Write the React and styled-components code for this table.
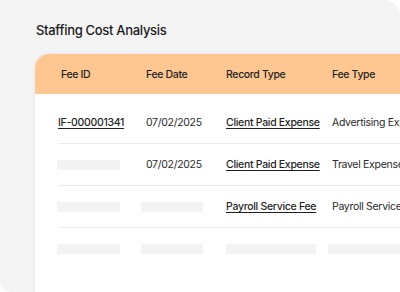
import styled, { createGlobalStyle } from "styled-components";

const GlobalStyle = createGlobalStyle`
  html, body {
    margin: 0;
    padding: 0;
    background: #ffffff;
  }
  body {
    font-family: "Inter", "Noto Sans", sans-serif;
    color: #222;
  }
`

const rows = [
    { id: "IF-000001341", date: "07/02/2025", record: "Client Paid Expense", fee: "Advertising Expense" },
    { id: null, date: "07/02/2025", record: "Client Paid Expense", fee: "Travel Expense" },
    { id: null, date: null, record: "Payroll Service Fee", fee: "Payroll Service Fee" },
    { id: null, date: null, record: null, fee: null },
];

export default function App(){
    return <>
    <GlobalStyle/>
    <Page>
        <Title>Staffing Cost Analysis</Title>
        <Table>
            <HeadRow>
                <HeadCell first>Fee ID</HeadCell>
                <HeadCell>Fee Date</HeadCell>
                <HeadCell>Record Type</HeadCell>
                <HeadCell>Fee Type</HeadCell>
            </HeadRow>
            <Body>
                {rows.map((row, i) =>
                    <Row key={i} last={i === rows.length - 1}>
                        <Cell>{row.id ? <LinkText>{row.id}</LinkText> : <Placeholder w={63} shift={-1}/>}</Cell>
                        <Cell>{row.date ? row.date : <Placeholder w={62} shift={-5}/>}</Cell>
                        <Cell>{row.record ? <LinkText>{row.record}</LinkText> : <Placeholder w={90}/>}</Cell>
                        <Cell>{row.fee ? row.fee : <Placeholder w={90} shift={-4}/>}</Cell>
                    </Row>
                )}
            </Body>
        </Table>
    </Page>
    </>
}

const Page = styled.div`
    width: 400px;
    height: 292px;
    box-sizing: border-box;
    background: #f4f4f4;
    border-radius: 0 16px 0 10px;
    padding: 20px 0 0 35px;
    overflow: hidden;
    display: flex;
    flex-direction: column;
`

const Title = styled.div`
    font-size: 13px;
    font-weight: 500;
    color: #1a1a1a;
    height: 20px;
    line-height: 20px;
    margin-left: 1px;
    margin-bottom: 14px;
    letter-spacing: -0.3px;
`

const Table = styled.div`
    flex: 1;
    width: 420px;
    background: #ffffff;
    border-top-left-radius: 14px;
    box-shadow: 0 0 4px rgba(0, 0, 0, 0.07);
    display: flex;
    flex-direction: column;
`

const HeadRow = styled.div`
    height: 40px;
    background: #fec791;
    border-top-left-radius: 14px;
    display: grid;
    grid-template-columns: 88px 80px 106px 1fr;
    align-items: center;
    padding-left: 23px;
`

const HeadCell = styled.div`
    font-size: 10.5px;
    font-weight: 500;
    letter-spacing: -0.35px;
    color: #1f1f1f;
    white-space: nowrap;
    padding-left: ${props => props.first ? "3px" : "0"};
`

const Body = styled.div`
    padding: 8px 0 0 23px;
`

const Row = styled.div`
    height: 41px;
    display: grid;
    grid-template-columns: 88px 80px 106px 1fr;
    align-items: center;
    border-bottom: ${props => props.last ? "none" : "1px solid #ececec"};
`

const Cell = styled.div`
    font-size: 10.5px;
    letter-spacing: -0.3px;
    color: #2a2a2a;
    white-space: nowrap;
`

const LinkText = styled.span`
    font-weight: 500;
    color: #1f1f1f;
    text-decoration: underline;
    text-underline-offset: 2px;
`

const Placeholder = styled.div`
    width: ${props => props.w}px;
    height: 10px;
    background: #f3f3f3;
    margin-left: ${props => props.shift || 0}px;
`
